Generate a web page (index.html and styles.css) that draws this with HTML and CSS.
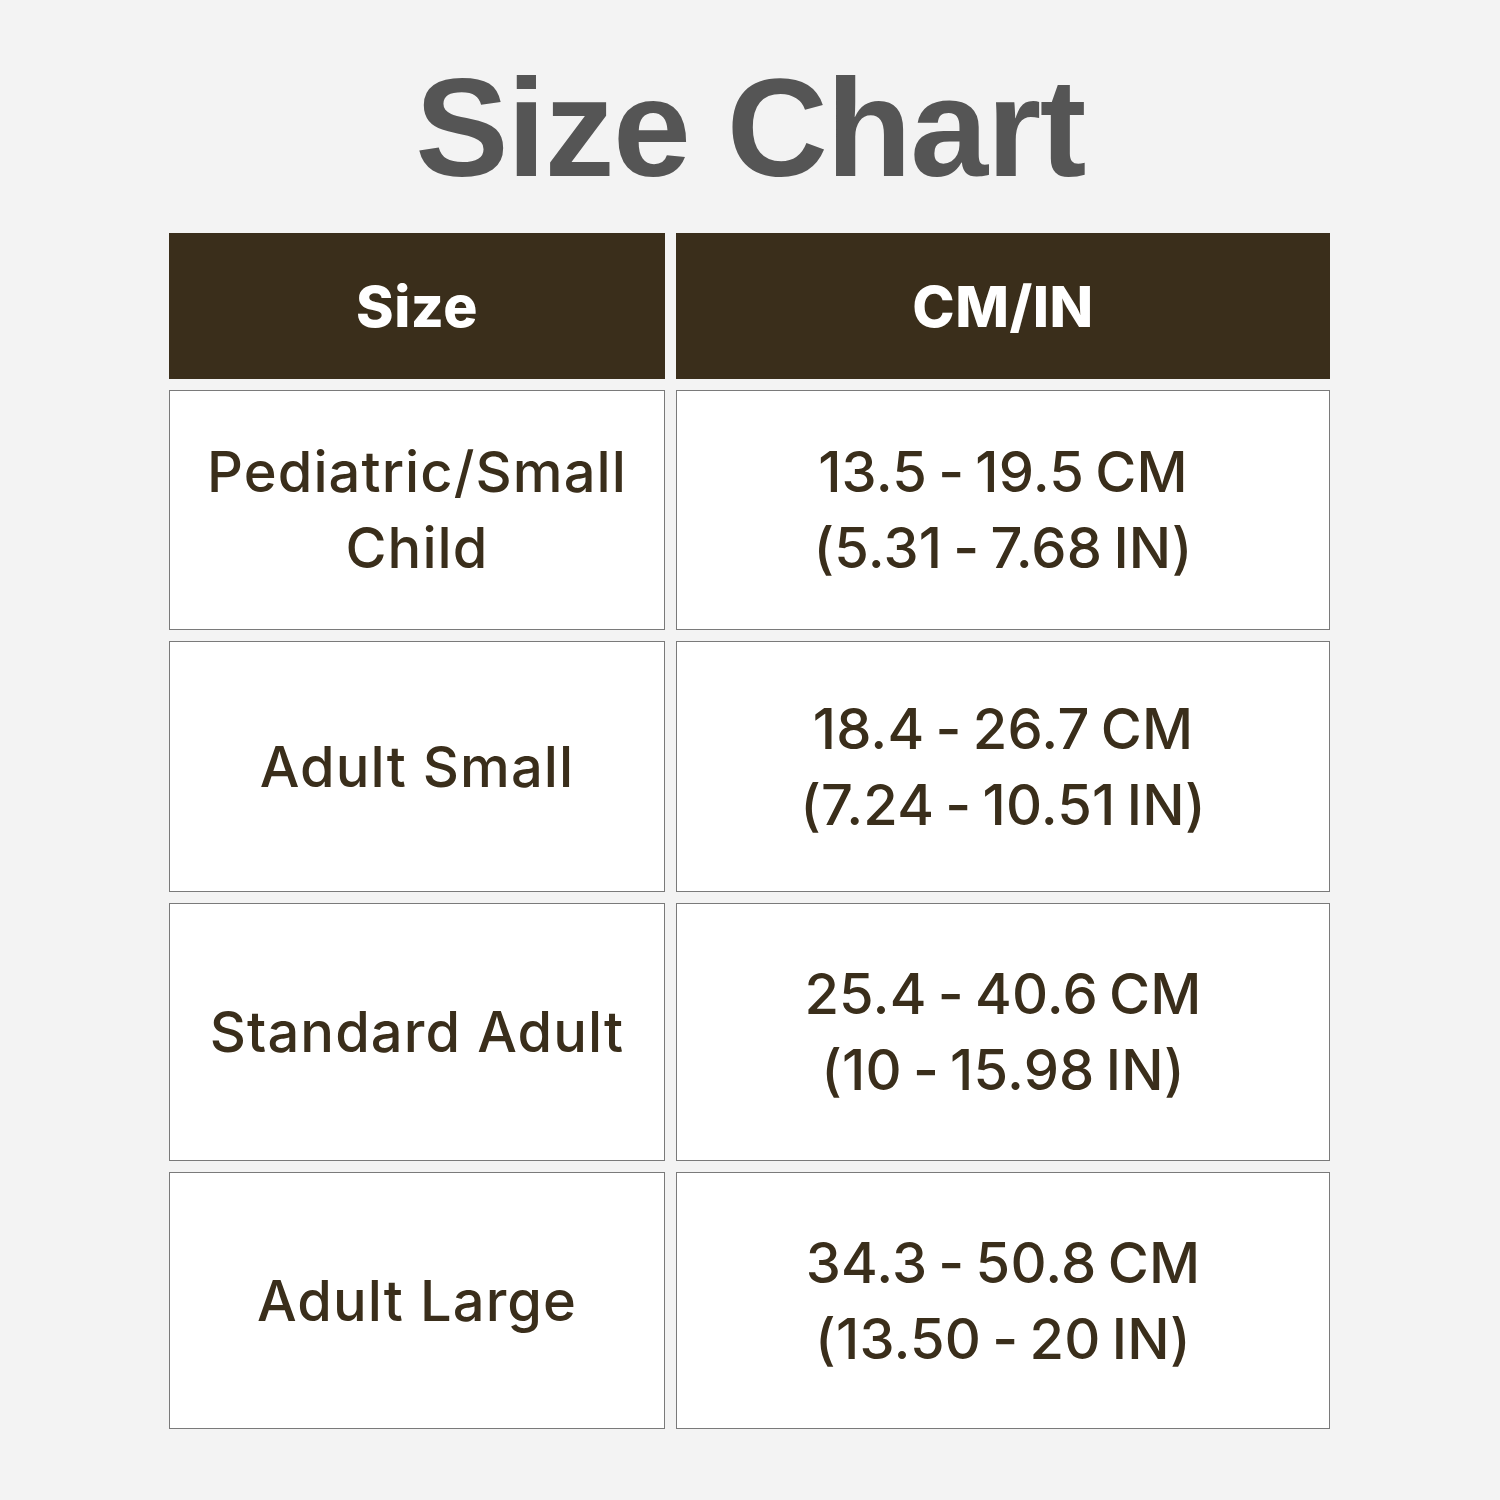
FILE: index.html
```html
<!DOCTYPE html>
<html lang="en">
<head>
<meta charset="utf-8">
<title>Size Chart</title>
<link rel="stylesheet" href="styles.css">
</head>
<body>
<main class="page">
  <h1 class="title">Size Chart</h1>
  <div class="chart">
    <div class="head">Size</div>
    <div class="head">CM/IN</div>
    <div class="cell label"><span>Pediatric/Small<br>Child</span></div>
    <div class="cell range"><span>13.5 - 19.5 CM<br>(5.31 - 7.68 IN)</span></div>
    <div class="cell label"><span>Adult Small</span></div>
    <div class="cell range"><span>18.4 - 26.7 CM<br>(7.24 - 10.51 IN)</span></div>
    <div class="cell label"><span>Standard Adult</span></div>
    <div class="cell range"><span>25.4 - 40.6 CM<br>(10 - 15.98 IN)</span></div>
    <div class="cell label"><span>Adult Large</span></div>
    <div class="cell range"><span>34.3 - 50.8 CM<br>(13.50 - 20 IN)</span></div>
  </div>
</main>
</body>
</html>
```

FILE: styles.css
```css
html, body {
  margin: 0;
  padding: 0;
  background: #f3f3f3;
}
.page {
  width: 1500px;
  height: 1500px;
  display: flex;
  flex-direction: column;
  align-items: center;
  padding-top: 58px;
  box-sizing: border-box;
}
.title {
  margin: 0 0 35px 0;
  font-family: "Liberation Sans", Arial, sans-serif;
  font-weight: 700;
  font-size: 140px;
  line-height: 140px;
  letter-spacing: -1.5px;
  color: #555555;
  text-align: center;
}
.chart {
  display: grid;
  grid-template-columns: 496px 654px;
  grid-template-rows: 146px 240px 251px 258px 257px;
  column-gap: 11px;
  row-gap: 11px;
  margin-left: -1px;
}
.head {
  background: #3a2e1b;
  color: #ffffff;
  font-family: Inter, "Noto Sans", sans-serif;
  font-weight: 800;
  font-size: 57px;
  letter-spacing: 0.5px;
  display: flex;
  align-items: center;
  justify-content: center;
}
.cell {
  background: #ffffff;
  border: 1.5px solid #7a7a7a;
  box-sizing: border-box;
  display: flex;
  align-items: center;
  justify-content: center;
  text-align: center;
  color: #3a2e1b;
  font-family: Inter, "Noto Sans", sans-serif;
  font-weight: 500;
  font-size: 56px;
  line-height: 76px;
}
.label {
  letter-spacing: 1.1px;
}
.range {
  letter-spacing: 0.2px;
  word-spacing: -4px;
}
```
